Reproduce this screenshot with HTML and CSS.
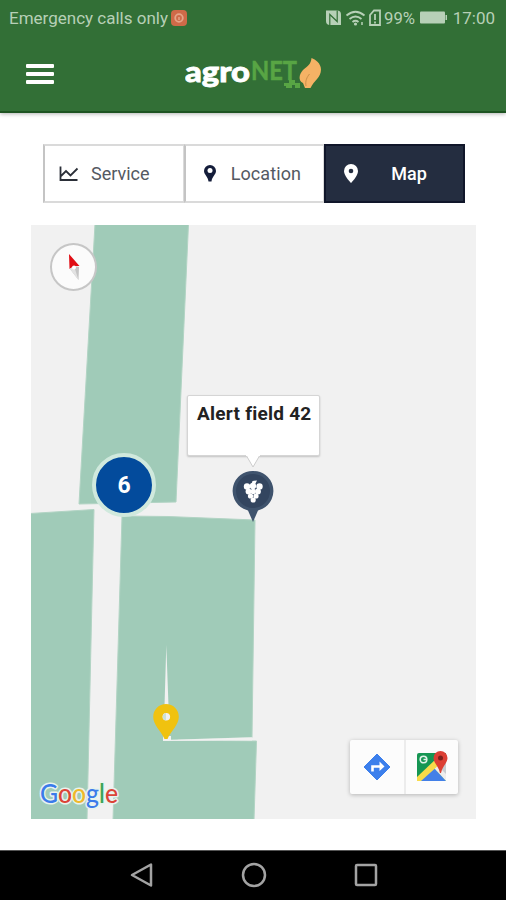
FILE: index.html
```html
<!DOCTYPE html>
<html lang="en">
<head>
  <meta charset="UTF-8">
  <meta name="viewport" content="width=device-width, initial-scale=1.0">
  <title>agroNET - Map</title>
  <link rel="stylesheet" href="styles.css">
</head>
<body>
  <div class="screen">
    <header>
      <div class="status-bar">
        <div class="status-left">
          <span class="carrier">Emergency calls only</span>
          <svg class="status-badge" width="16" height="16" viewBox="0 0 16 16">
            <rect width="16" height="16" rx="4" fill="#cf6a48"/>
            <circle cx="8" cy="8" r="3.8" fill="none" stroke="#e5a488" stroke-width="1.8"/>
            <path d="M8 7v3" stroke="#e5a488" stroke-width="1.5"/>
          </svg>
        </div>
        <div class="status-right">
          <svg width="122" height="20" viewBox="0 0 122 20">
            <path d="M1 2.500H12q4 0 4 4V17H5q-4 0-4-4z" fill="#b7d0b7"/>
            <path d="M4.800 17V6.500L12.200 13.500V2.500" fill="none" stroke="#326f36" stroke-width="1.200"/>
            <g fill="none" stroke="#b7d0b7" stroke-width="1.800">
              <path d="M21.500 7.500q9-7.500 18 0M24.500 11q6-5 12 0M27.500 14q3-2.500 6 0"/>
              <path d="M45 7l4-4.500h6V17H45z"/>
              <path d="M50 6v6M50 13.500v2"/>
            </g>
            <circle cx="30.500" cy="16" r="1.600" fill="#b7d0b7"/>
            <path d="M37 14v3" stroke="#b7d0b7" stroke-width="1.500"/>
            <text x="59" y="16" class="status-text" textLength="31" lengthAdjust="spacingAndGlyphs">99%</text>
            <rect x="95" y="3.500" width="25" height="12" rx="1" fill="#b7d0b7"/>
            <path d="M120.500 7H122v5h-1.500z" fill="#b7d0b7"/>
          </svg>
          <span class="clock">17:00</span>
        </div>
      </div>
      <div class="toolbar">
        <button class="menu-btn" aria-label="Menu"><span></span><span></span><span></span></button>
        <svg class="logo" width="140" height="40" viewBox="0 0 140 40">
          <text x="0" y="28" class="logo-agro" textLength="65" lengthAdjust="spacingAndGlyphs">agro</text>
          <text x="66" y="26" class="logo-net" textLength="46" lengthAdjust="spacingAndGlyphs">NET</text>
          <path d="M99 32v-3h5v-3h6v3h5v5h-5v-3h-3v3h-6v-2z" fill="#58a544"/>
          <path d="M126.500 4c4 1.500 9.500 5.500 9.500 11.500 0 8-7 11-10.500 18.500h-5.500l-2-5c-5-2-4-9 0-13 5-4 8-6 8.500-12z" fill="#f5b265"/>
          <path d="M121 32c-1-5 1-9 3.500-12" fill="none" stroke="#c98f49" stroke-width="1"/>
        </svg>
      </div>
    </header>

    <main>
      <nav class="tabs">
        <button class="tab">
          <svg width="20" height="18" viewBox="0 0 20 18" fill="none" stroke="#2b2f38" stroke-width="1.800">
            <path d="M1.500 1.500v13.500h17M2 11l5-5 4.500 4.500 7-7"/>
          </svg>
          <span class="service-label">Service</span>
        </button>
        <button class="tab tab-location">
          <svg width="14" height="19" viewBox="0 0 14 19">
            <path d="M7 1a6 6 0 0 1 6 6c0 3.500-4 5.500-4.500 10.500h-3C5 12.500 1 10.500 1 7a6 6 0 0 1 6-6z" fill="#141d3a"/>
            <circle cx="7" cy="6.500" r="2.500" fill="#fff"/>
          </svg>
          <span class="location-label">Location</span>
        </button>
        <button class="tab tab-map active">
          <svg width="16" height="21" viewBox="0 0 16 21">
            <path d="M8 1a7 7 0 0 1 7 7c0 5-7 12-7 12S1 13 1 8a7 7 0 0 1 7-7z" fill="#fff"/>
            <circle cx="8" cy="8" r="2.300" fill="#242d40"/>
          </svg>
          <span class="map-label">Map</span>
        </button>
      </nav>

      <section class="map">
        <!-- fields -->
        <svg class="fields" width="445" height="594" viewBox="31 225 445 594">
          <g fill="#a0cbb8" stroke="#b2d4c4" stroke-width="1">
            <path d="M95 224H188.500L176 502 79 504z"/>
            <path d="M30 513.500L94 509.500 87 820H30z"/>
            <path d="M122 516L168 516.500 255 520 252 737.500 178 740 252 741h4.500L254 820H113z"/>
          </g>
          <path d="M166.300 645L164.500 706H168.500zM163 740L252 737.300V740.500L163 741z" fill="#f1f1f1"/>
        </svg>

        <div class="compass">
          <svg width="14" height="28" viewBox="0 0 14 28">
            <path d="M2 1L12.500 13 7 13 2.500 16z" fill="#e00d14"/>
            <path d="M3 16L7 13 12 14 11.500 27z" fill="#c4c4c4"/>
            <path d="M3 16L7 13 11.500 27z" fill="#e2e2e2"/>
            <circle cx="7" cy="14.500" r="2" fill="#fff"/>
          </svg>
        </div>

        <div class="cluster">6</div>

        <div class="info-window">Alert field 42</div>
        <svg class="info-tip" width="16" height="13" viewBox="0 0 16 13">
          <path d="M1 0L8 12 15 0" fill="#fff" stroke="#ccc" stroke-width="1"/>
          <path d="M1 0H15" stroke="#fff" stroke-width="2"/>
        </svg>

        <svg class="pin pin-grape" width="42" height="53" viewBox="0 0 42 53">
          <path d="M21 1a20 20 0 0 1 9.500 37.800L26 40.500 21 52l-5-11.500-4.500-1.700A20 20 0 0 1 21 1z" fill="#3f536d"/>
          <circle cx="21" cy="21" r="17" fill="#33455f"/>
          <g fill="#fff">
            <path d="M19.500 14l1-3 4.500-.5-2 4z"/>
            <circle cx="15" cy="16.500" r="3.200"/>
            <circle cx="27.500" cy="16.500" r="3.200"/>
            <circle cx="21" cy="16" r="3.200"/>
            <circle cx="16.500" cy="21.500" r="2.900"/>
            <circle cx="21.200" cy="21.500" r="2.700"/>
            <circle cx="26" cy="21.500" r="2.900"/>
            <circle cx="18.500" cy="26" r="2.600"/>
            <circle cx="24" cy="26" r="2.600"/>
            <circle cx="21.200" cy="30" r="2.600"/>
          </g>
        </svg>

        <svg class="pin pin-yellow" width="28" height="38" viewBox="0 0 28 38">
          <path d="M11 33h8v4h-8z" fill="#f1f1f1"/>
          <path d="M14 1a12.800 12.800 0 0 1 12.800 12.800C26.800 22 19 28 15.500 36h-3C9 28 1.200 22 1.200 13.800A12.800 12.800 0 0 1 14 1z" fill="#f0c20f"/>
          <circle cx="14.300" cy="13.800" r="3.800" fill="#f1f1f1"/>
          <path d="M14 10v7.500a3.800 3.800 0 0 1 0-7.500z" fill="#cde1d7"/>
        </svg>

        <svg class="google" width="86" height="34" viewBox="0 0 86 34">
          <text x="3" y="25" textLength="78" lengthAdjust="spacingAndGlyphs"><tspan fill="#3b7bea">G</tspan><tspan fill="#dc4437">o</tspan><tspan fill="#efb92b">o</tspan><tspan fill="#3b7bea">g</tspan><tspan fill="#3ba457">l</tspan><tspan fill="#dc4437">e</tspan></text>
        </svg>

        <div class="map-actions">
          <button aria-label="Directions">
            <svg width="28" height="28" viewBox="0 0 28 28">
              <path d="M14 1L27 14 14 27 1 14z" fill="#3c7fec" stroke="#3c7fec" stroke-linejoin="round"/>
              <path d="M9.500 18.500v-5h9" fill="none" stroke="#fff" stroke-width="2.600"/>
              <path d="M16.500 8.500L21.500 13.500 16.500 18z" fill="#fff"/>
            </svg>
          </button>
          <button aria-label="Open in Google Maps">
            <svg width="32" height="32" viewBox="0 0 32 32">
              <path d="M3 2h27v28H1V4q0-2 2-2z" fill="#169653"/>
              <path d="M2 30L17 16 30 30z" fill="#4380e8"/>
              <path d="M17 16l4-4 9 8v10z" fill="#eee"/>
              <path d="M1 26L21 7l3 6L5 30H1z" fill="#f8db4a"/>
              <path d="M22 15l8 8V9z" fill="#c9cccf"/>
              <circle cx="7.500" cy="8.500" r="3.300" fill="none" stroke="#e2f2e9" stroke-width="1.600"/>
              <path d="M7.500 8.500h3.500" stroke="#e2f2e9" stroke-width="1.500"/>
              <path d="M24.500 0a7 7 0 0 1 7 7c0 5-5 8-6.500 15h-1c-1.500-7-6.500-10-6.500-15a7 7 0 0 1 7-7z" fill="#dc3f34"/>
              <circle cx="24.500" cy="7" r="2.500" fill="#7e201b"/>
            </svg>
          </button>
        </div>
      </section>
    </main>

    <footer class="nav-bar">
      <svg width="24" height="26" viewBox="0 0 24 26">
        <path d="M21 2.500V23.500L2 13z"/>
      </svg>
      <svg width="26" height="26" viewBox="0 0 26 26">
        <circle cx="13" cy="13" r="11"/>
      </svg>
      <svg width="24" height="26" viewBox="0 0 24 26">
        <rect x="2" y="3" width="20" height="20" rx="1"/>
      </svg>
    </footer>
  </div>
</body>
</html>
```

FILE: styles.css
```css
* {
  box-sizing: border-box;
  margin: 0;
  padding: 0;
}

body,
button {
  font-family: Roboto, 'Liberation Sans', sans-serif;
}

body {
  background: #fff;
}

svg {
  display: block;
  flex: none;
}

button {
  border: none;
  background: none;
}

.screen {
  height: 900px;
  display: flex;
  flex-direction: column;
  overflow: hidden;
}

header {
  height: 113px;
  background: #326f36;
  border-bottom: 2px solid #1e5422;
  box-shadow: 0 1px 4px rgba(0, 0, 0, 0.3);
}

.status-bar {
  height: 36px;
  padding: 0 11px 0 9px;
  display: flex;
  justify-content: space-between;
  align-items: center;
}

.status-left,
.status-right {
  display: flex;
  align-items: center;
}

.carrier,
.clock {
  color: #b7d0b7;
  font-size: 17px;
  white-space: nowrap;
}

.carrier {
  width: 162px;
  letter-spacing: 0;
}

.status-badge {
  margin-top: -1px;
}

.status-text {
  fill: #b7d0b7;
  font-size: 17px;
}

.clock {
  margin-left: 6px;
}

.toolbar {
  height: 75px;
  display: flex;
  align-items: center;
  padding-left: 26px;
}

.menu-btn {
  width: 28px;
  display: flex;
  flex-direction: column;
  gap: 4px;
}

.menu-btn span {
  height: 4px;
  border-radius: 1px;
  background: #fff;
}

.logo {
  margin-left: 131px;
}

.logo-agro {
  font-family: Lato, sans-serif;
  font-size: 29px;
  font-weight: 900;
  fill: #fff;
  stroke: #fff;
  stroke-width: 0.8px;
}

.logo-net {
  font-family: Lato, sans-serif;
  font-size: 26px;
  font-weight: 700;
  fill: #58a544;
  stroke: #58a544;
  stroke-width: 0.5px;
}

main {
  flex: 1;
  padding: 31px 30px 0 31px;
}

.tabs {
  width: 422px;
  height: 59px;
  margin: 0 0 22px 12px;
  display: grid;
  grid-template-columns: repeat(3, 1fr);
}

.tab {
  display: flex;
  align-items: center;
  padding-left: 14px;
  border: 2px solid #dadada;
  border-left-color: #c4c4c4;
  border-right-width: 1px;
  color: #545962;
  font-size: 18px;
}

.service-label {
  margin-left: 12px;
}

.tab-location {
  padding-left: 17px;
}

.location-label {
  margin-left: 14px;
  letter-spacing: 0.1px;
}

.tab-map {
  padding-left: 17px;
}

.map-label {
  margin-left: 32px;
}

.tab.active {
  background: #242d40;
  border: 2px solid #10162a;
  color: #fff;
  font-weight: 500;
}

.map {
  position: relative;
  width: 445px;
  height: 594px;
  background: #f1f1f1;
}

/* map overlays */
.compass {
  position: absolute;
  left: 19px;
  top: 18px;
  width: 47px;
  height: 48px;
  border: 2px solid #c6c6c6;
  border-radius: 50%;
  background: #fbfbfb;
  display: flex;
  justify-content: center;
  padding-top: 8px;
}

.cluster {
  position: absolute;
  left: 61px;
  top: 228px;
  width: 64px;
  height: 64px;
  border: 4px solid #d0e9dd;
  border-radius: 50%;
  background: #034b9c;
  color: #fff;
  font-size: 23px;
  font-weight: 700;
  line-height: 57px;
  text-align: center;
}

.info-window {
  position: absolute;
  left: 156px;
  top: 170px;
  width: 133px;
  height: 61px;
  padding: 7px 9px;
  background: #fff;
  border: 1px solid #d5d5d5;
  border-radius: 2px;
  box-shadow: 0 1px 2px rgba(0, 0, 0, 0.2);
  color: #222;
  font-size: 19px;
  font-weight: 700;
  line-height: 22px;
  letter-spacing: 0.25px;
  white-space: nowrap;
}

.info-tip {
  position: absolute;
  left: 214px;
  top: 230px;
}

.pin {
  position: absolute;
}

.pin-grape {
  left: 201px;
  top: 245px;
}

.pin-yellow {
  left: 121px;
  top: 478px;
}

.google {
  position: absolute;
  left: 6px;
  top: 553px;
}

.google text {
  font-family: Lato, sans-serif;
  font-size: 26px;
  font-weight: 500;
  stroke: #e8f3ee;
  stroke-width: 3px;
  stroke-linejoin: round;
  paint-order: stroke;
}

.map-actions {
  position: absolute;
  left: 319px;
  top: 515px;
  display: flex;
  background: #fcfcfc;
  border-radius: 2px;
  box-shadow: 0 1px 4px rgba(0, 0, 0, 0.25);
}

.map-actions button {
  width: 54px;
  height: 54px;
  display: flex;
  align-items: center;
  justify-content: center;
}

.map-actions button + button {
  border-left: 2px solid #ececec;
}

.nav-bar {
  height: 50px;
  padding: 0 0 2px 2px;
  background: #000;
  border-top: 1px solid #555;
  display: flex;
  justify-content: center;
  align-items: center;
  gap: 87px;
}

.nav-bar svg {
  fill: none;
  stroke: #a3a3a3;
  stroke-width: 2.5px;
  stroke-linejoin: round;
}
```
